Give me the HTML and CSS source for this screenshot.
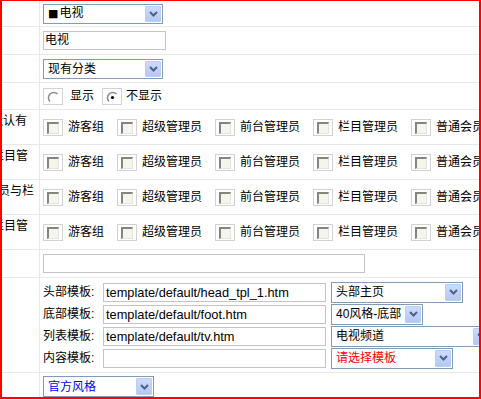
FILE: index.html
```html
<!DOCTYPE html>
<html lang="zh-CN">
  <head>
    <meta charset="UTF-8" />
    <title>栏目设置</title>
    <link rel="stylesheet" href="styles.css">
  </head>
  <body>
    <div class="frame">
      <div class="row h25">
        <div class="label"></div>
        <div class="field">
          <div class="select w119">
            <span class="val"><span class="square">■</span>电视</span>
            <span class="arrow"><svg width="9" height="6" viewBox="0 0 9 6"><path d="M1 1 L4.5 4.5 L8 1" /></svg></span>
          </div>
        </div>
      </div>

      <div class="row h27">
        <div class="label"></div>
        <div class="field">
          <div class="input w122">电视</div>
        </div>
      </div>

      <div class="row h27">
        <div class="label"></div>
        <div class="field">
          <div class="select w119">
            <span class="val">现有分类</span>
            <span class="arrow"><svg width="9" height="6" viewBox="0 0 9 6"><path d="M1 1 L4.5 4.5 L8 1" /></svg></span>
          </div>
        </div>
      </div>

      <div class="row h26">
        <div class="label"></div>
        <div class="field">
          <span class="box"><svg class="radio" width="13" height="13" viewBox="0 0 13 13"><path d="M3 10.5 A5 5 0 0 1 10.5 3" /></svg></span>
          <span class="radio-text first">显示</span>
          <span class="box"><svg class="radio" width="13" height="13" viewBox="0 0 13 13"><path d="M3 10.5 A5 5 0 0 1 10.5 3" /><circle cx="6.5" cy="6.5" r="1.6" /></svg></span>
          <span class="radio-text second">不显示</span>
        </div>
      </div>

      <div class="row h34">
        <div class="label"><span class="cut" style="margin-left: -11px">默认有</span></div>
        <div class="field checks">
          <span class="box"><span class="check"></span></span><span class="check-text">游客组</span>
          <span class="box"><span class="check"></span></span><span class="check-text">超级管理员</span>
          <span class="box"><span class="check"></span></span><span class="check-text">前台管理员</span>
          <span class="box"><span class="check"></span></span><span class="check-text">栏目管理员</span>
          <span class="box"><span class="check"></span></span><span class="check-text">普通会员</span>
        </div>
      </div>

      <div class="row h34">
        <div class="label"><span class="cut" style="margin-left: -10px">栏目管</span></div>
        <div class="field checks">
          <span class="box"><span class="check"></span></span><span class="check-text">游客组</span>
          <span class="box"><span class="check"></span></span><span class="check-text">超级管理员</span>
          <span class="box"><span class="check"></span></span><span class="check-text">前台管理员</span>
          <span class="box"><span class="check"></span></span><span class="check-text">栏目管理员</span>
          <span class="box"><span class="check"></span></span><span class="check-text">普通会员</span>
        </div>
      </div>

      <div class="row h34">
        <div class="label"><span class="cut" style="margin-left: -4px">员与栏</span></div>
        <div class="field checks">
          <span class="box"><span class="check"></span></span><span class="check-text">游客组</span>
          <span class="box"><span class="check"></span></span><span class="check-text">超级管理员</span>
          <span class="box"><span class="check"></span></span><span class="check-text">前台管理员</span>
          <span class="box"><span class="check"></span></span><span class="check-text">栏目管理员</span>
          <span class="box"><span class="check"></span></span><span class="check-text">普通会员</span>
        </div>
      </div>

      <div class="row h34">
        <div class="label"><span class="cut" style="margin-left: -10px">栏目管</span></div>
        <div class="field checks">
          <span class="box"><span class="check"></span></span><span class="check-text">游客组</span>
          <span class="box"><span class="check"></span></span><span class="check-text">超级管理员</span>
          <span class="box"><span class="check"></span></span><span class="check-text">前台管理员</span>
          <span class="box"><span class="check"></span></span><span class="check-text">栏目管理员</span>
          <span class="box"><span class="check"></span></span><span class="check-text">普通会员</span>
        </div>
      </div>

      <div class="row h27">
        <div class="label"></div>
        <div class="field">
          <div class="input w321"></div>
        </div>
      </div>

      <div class="row h94">
        <div class="label"></div>
        <div class="field templates">
          <div class="tpl-line">
            <span class="tpl-label">头部模板:</span>
            <div class="input tpl-input">template/default/head_tpl_1.htm</div>
            <div class="select tall w131">
              <span class="val">头部主页</span>
              <span class="arrow"><svg width="9" height="6" viewBox="0 0 9 6"><path d="M1 1 L4.5 4.5 L8 1" /></svg></span>
            </div>
          </div>
          <div class="tpl-line">
            <span class="tpl-label">底部模板:</span>
            <div class="input tpl-input">template/default/foot.htm</div>
            <div class="select tall w92">
              <span class="val">40风格-底部</span>
              <span class="arrow"><svg width="9" height="6" viewBox="0 0 9 6"><path d="M1 1 L4.5 4.5 L8 1" /></svg></span>
            </div>
          </div>
          <div class="tpl-line">
            <span class="tpl-label">列表模板:</span>
            <div class="input tpl-input">template/default/tv.htm</div>
            <div class="select tall w160">
              <span class="val">电视频道</span>
              <span class="arrow"><svg width="9" height="6" viewBox="0 0 9 6"><path d="M1 1 L4.5 4.5 L8 1" /></svg></span>
            </div>
          </div>
          <div class="tpl-line">
            <span class="tpl-label">内容模板:</span>
            <div class="input tpl-input"></div>
            <div class="select tall w121">
              <span class="val red">请选择模板</span>
              <span class="arrow"><svg width="9" height="6" viewBox="0 0 9 6"><path d="M1 1 L4.5 4.5 L8 1" /></svg></span>
            </div>
          </div>
        </div>
      </div>

      <div class="row h24 last">
        <div class="label"></div>
        <div class="field top">
          <div class="select tall w110">
            <span class="val blue">官方风格</span>
            <span class="arrow"><svg width="9" height="6" viewBox="0 0 9 6"><path d="M1 1 L4.5 4.5 L8 1" /></svg></span>
          </div>
        </div>
      </div>
    </div>
  </body>
</html>
```

FILE: styles.css
```css
* {
  box-sizing: border-box;
  margin: 0;
  padding: 0;
}

body {
  background: #fff;
  font-family: "Liberation Sans", "Noto Sans CJK SC", sans-serif;
  font-size: 12px;
  line-height: 14px;
  color: #000;
}

.frame {
  width: 481px;
  height: 399px;
  border: 2px solid #ff0000;
  border-top-width: 1px;
  overflow: hidden;
}

.row {
  display: flex;
  border-bottom: 1px solid #e8e8e8;
}

.row.last {
  border-bottom: none;
}

.h24 { height: 24px; }
.h25 { height: 26px; }
.h26 { height: 27px; }
.h27 { height: 28px; }
.h34 { height: 35px; }
.h94 { height: 95px; }

.label {
  width: 38px;
  flex-shrink: 0;
  border-right: 1px solid #e8e8e8;
  overflow: hidden;
  white-space: nowrap;
  padding-top: 3px;
  font-family: "Noto Sans CJK SC", sans-serif;
}

.cut {
  display: inline-block;
}

.field {
  flex: 1;
  display: flex;
  align-items: center;
  padding-left: 3px;
  white-space: nowrap;
  min-width: 0;
}

.field.top {
  align-items: flex-start;
  padding-top: 3px;
}

/* select boxes */
.select {
  display: flex;
  align-items: center;
  height: 20px;
  border: 1px solid #7f9db9;
  background: #fff;
  flex-shrink: 0;
}

.select.tall {
  height: 21px;
}

.select .val {
  flex: 1;
  padding-left: 4px;
  overflow: hidden;
}

.square {
  font-family: "DejaVu Sans", sans-serif;
  font-size: 11px;
  margin-right: 1px;
}

.select .arrow {
  width: 16px;
  height: calc(100% - 2px);
  margin-right: 1px;
  display: flex;
  align-items: center;
  justify-content: center;
  background: linear-gradient(#cddbfc, #b3c8f6);
  border: 1px solid #bccdf3;
  border-radius: 1px;
}

.arrow path {
  fill: none;
  stroke: #4d6185;
  stroke-width: 2;
}

.w92 { width: 92px; }
.w110 { width: 111px; }
.w119 { width: 120px; }
.w121 { width: 122px; }
.w131 { width: 132px; }
.w160 { width: 160px; }

.red { color: #ff0000; }
.blue { color: #0000ff; }

/* text inputs */
.input {
  height: 19px;
  border: 1px solid #c4c4c4;
  background: #fff;
  padding-left: 1px;
  line-height: 17px;
  overflow: hidden;
  flex-shrink: 0;
}

.w122 { width: 123px; }
.w321 { width: 322px; }

/* checkbox / radio boxes */
.box {
  width: 20px;
  height: 17px;
  border: 1px solid #d2d2d2;
  display: inline-flex;
  align-items: flex-start;
  padding: 2px 0 0 3px;
  flex-shrink: 0;
}

.check {
  display: block;
  width: 12px;
  height: 12px;
  background: #f5f5ee;
  border-top: 2px solid #85857d;
  border-left: 2px solid #85857d;
  border-right: 1px solid #e4e4dc;
  border-bottom: 1px solid #e4e4dc;
}

.radio path {
  fill: none;
  stroke: #8a8a86;
  stroke-width: 1.5;
}

.radio circle {
  fill: #000;
}

.radio-text {
  margin-left: 7px;
}

.radio-text.first {
  margin-right: 8px;
}

.radio-text.second {
  margin-left: 4px;
}

.check-text {
  margin-left: 5px;
  margin-right: 13px;
}

/* template block */
.templates {
  flex-direction: column;
  align-items: flex-start;
  justify-content: flex-start;
  padding-top: 3px;
}

.tpl-line {
  height: 22px;
  display: flex;
  align-items: center;
}

.tpl-label {
  width: 60px;
  flex-shrink: 0;
}

.tpl-input {
  width: 223px;
  margin-right: 5px;
  padding-left: 2px;
  font-size: 12.8px;
}
```
